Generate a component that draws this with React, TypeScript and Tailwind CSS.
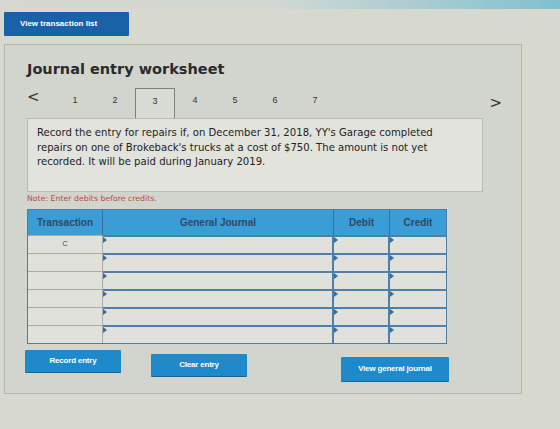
import React from 'react';

const tabs = [1, 2, 3, 4, 5, 6, 7];
const rows = ['C', '', '', '', '', ''];

function Btn({ label, className }: { label: string; className: string }) {
  return (
    <button
      className={`bg-[#1f8acb] text-white font-bold text-[8px] tracking-tight rounded-[1px] shadow-[0_1px_0_#17669a] ${className}`}
      style={{ fontFamily: '"Liberation Sans", Arial, sans-serif' }}
    >
      {label}
    </button>
  );
}

export default function App() {
  return (
    <div
      className="w-[560px] h-[429px] overflow-hidden bg-[#d7d8ce] text-[#2e2e2e]"
      style={{ fontFamily: '"DejaVu Sans", Verdana, sans-serif' }}
    >
      {/* top edge */}
      <div className="h-[9px] bg-gradient-to-r from-[#d7d8ce] via-[#cfd8d4] to-[#7fc0cf]" />

      <div className="pl-[4px]">
        <button
          className="w-[125px] h-[24px] bg-[#1a62a8] text-white font-bold text-[8px] text-left pl-[16px] rounded-[1px]"
          style={{ fontFamily: '"Liberation Sans", Arial, sans-serif' }}
        >
          View transaction list
        </button>
      </div>

      <div className="ml-[4px] mt-[8px] w-[518px] h-[350px] border border-[#b3b5b0] bg-[#d2d5ce] pl-[22px] pt-[15px]">
        <h1 className="text-[14.5px] font-bold text-[#2a2a2a] leading-[18px]">Journal entry worksheet</h1>

        {/* step tabs */}
        <div className="mt-[10px] flex items-start h-[30px] w-[475px] text-[#333]">
          <span className="w-[28px] pt-[2px] text-[15px] leading-none">&lt;</span>
          {tabs.map((t) => (
            <div
              key={t}
              className={`w-[40px] h-[30px] flex justify-center pt-[6px] text-[9px] ${
                t === 3 ? 'border border-b-0 border-[#7f817d] bg-[#d9dbd5]' : ''
              }`}
              style={{ fontFamily: '"Liberation Sans", Arial, sans-serif' }}
            >
              {t}
            </div>
          ))}
          <span className="ml-auto pt-[8px] text-[15px] leading-none">&gt;</span>
        </div>

        <div className="w-[456px] h-[74px] border border-[#b8b9b2] bg-[#e2e3dc] px-[9px] pt-[7px] text-[10.1px] leading-[14.5px] text-[#222]">
          Record the entry for repairs if, on December 31, 2018, YY's Garage completed
          <br />
          repairs on one of Brokeback's trucks at a cost of $750. The amount is not yet
          <br />
          recorded. It will be paid during January 2019.
        </div>

        <p className="mt-[1px] text-[7.8px] text-[#c0473f] leading-[12px]">Note: Enter debits before credits.</p>

        {/* journal table */}
        <div
          className="mt-[4px] w-[420px] border border-[#4d7ea6]"
          style={{ fontFamily: '"Liberation Sans", Arial, sans-serif' }}
        >
          <div className="flex h-[25px] bg-[#3a9dd6] text-[10px] font-bold text-[#2d4a68]">
            <div className="w-[75px] border-r border-[#3c6f96] flex items-center justify-center">Transaction</div>
            <div className="w-[231px] border-r border-[#3c6f96] flex items-center justify-center">General Journal</div>
            <div className="w-[56px] border-r border-[#3c6f96] flex items-center justify-center">Debit</div>
            <div className="flex-1 flex items-center justify-center">Credit</div>
          </div>
          {rows.map((r, i) => (
            <div key={i} className="flex h-[18px] bg-[#e0e1da]">
              <div className="w-[75px] border-t border-r border-[#a9aba6] flex items-center justify-center text-[7px] text-[#444]">
                {r}
              </div>
              {[231, 56, 0].map((w, j) => (
                <div
                  key={j}
                  className={`relative border-t-2 border-[#4f7fa8] ${j < 2 ? 'border-r-2' : 'flex-1'}`}
                  style={w ? { width: w } : undefined}
                >
                  <span className="absolute left-0 top-0 w-0 h-0 border-t-[3px] border-b-[3px] border-l-[4px] border-t-transparent border-b-transparent border-l-[#2f6da3]" />
                </div>
              ))}
            </div>
          ))}
        </div>

        <div className="mt-[6px] flex items-start">
          <Btn label="Record entry" className="ml-[-2px] w-[96px] h-[22px]" />
          <Btn label="Clear entry" className="ml-[30px] mt-[4px] w-[96px] h-[22px]" />
          <Btn label="View general journal" className="ml-[94px] mt-[7px] w-[108px] h-[24px]" />
        </div>
      </div>
    </div>
  );
}
